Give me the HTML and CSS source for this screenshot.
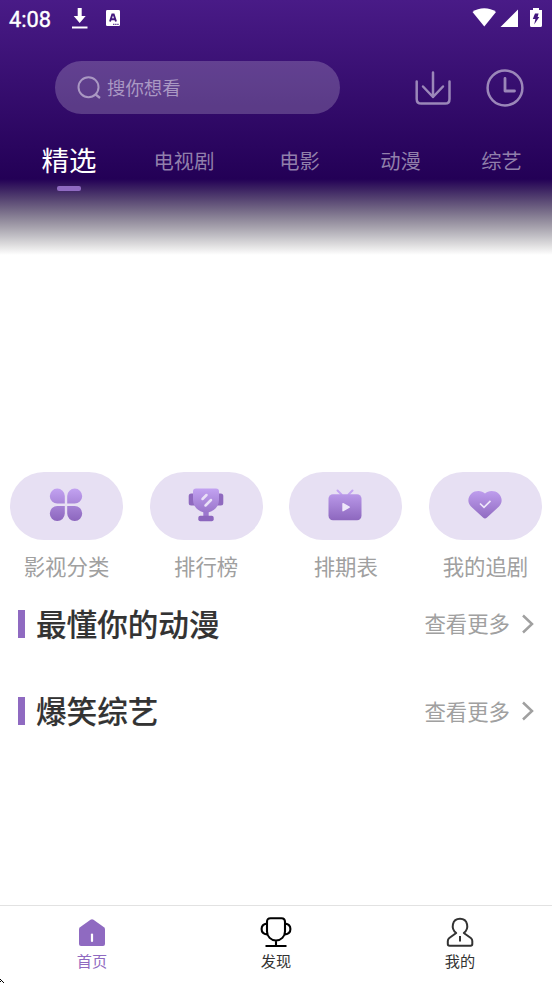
FILE: index.html
```html
<!DOCTYPE html>
<html lang="zh-CN">
<head>
<meta charset="utf-8">
<title>首页</title>
<link rel="stylesheet" href="styles.css">
</head>
<body>
<svg class="defs" width="0" height="0" aria-hidden="true">
  <defs>
    <linearGradient id="violet" gradientUnits="userSpaceOnUse" x1="0" y1="3" x2="0" y2="36"><stop offset="0" stop-color="#c3a3f2"/><stop offset="1" stop-color="#8c66bd"/></linearGradient>
  </defs>
</svg>
<div class="app">
  <header class="hero">
    <div class="status">
      <span class="time">4:08</span>
      <svg class="st-down" width="16" height="22" viewBox="0 0 16 22"><path d="M5.700 1h4v8h4l-6 7-6-7h4z" fill="#fff"/><path d="M0 20.500h15.500" stroke="#fff" stroke-width="2"/></svg>
      <svg class="st-app" width="14" height="16" viewBox="0 0 14 16"><rect width="14" height="16" rx="1.200" fill="#fff"/><path d="M4 11.500L6.300 4.500h1.400L10 11.500M5 9.200h4" fill="none" stroke="#42187e" stroke-width="1.900"/><path d="M7 14.300h6" stroke="#42187e" stroke-dasharray="1.500 .6"/></svg>
      <svg class="st-right" width="71" height="22" viewBox="0 0 71 22"><path d="M.5 5C7 0 17.500 0 24 5L12.300 19.500z" fill="#fff"/><path d="M46 2.500V20H28.500z" fill="#fff"/><path d="M58 3h3V1h6v2h3v15.500q0 1.500-1.500 1.500h-9Q58 20 58 18.500z" fill="#fff"/><path d="M63 6.500h3.600l-1 3.500h1.700l-5.100 7.500 1.200-5.500h-2.600z" fill="#42187e"/></svg>
    </div>
    <div class="topbar">
      <div class="search">
        <svg width="24" height="24" viewBox="0 0 24 24" fill="none" stroke="#aa98c3" stroke-width="2"><circle cx="11.500" cy="11.200" r="10"/><path d="M18 18l5 4" stroke-width="2.300"/></svg>
        <span>搜你想看</span>
      </div>
      <svg class="ic-down" width="38" height="36" viewBox="0 0 38 36" fill="none" stroke="#9b87b9" stroke-width="2.500" stroke-linecap="round" stroke-linejoin="round"><path d="M2.700 11.500V29q0 4.600 4.600 4.600h24Q35.500 33.600 35.500 29V11.500M19 2.500v24.500M9 16.500L19 27l10-10.500"/></svg>
      <svg class="ic-clock" width="38" height="38" viewBox="0 0 38 38" fill="none" stroke="#9b87b9" stroke-width="2.500"><circle cx="19" cy="19" r="17.400"/><path d="M19 9.500V22h9.500" stroke-width="2.800" stroke-linecap="round" stroke-linejoin="round"/></svg>
    </div>
    <nav class="tabs">
      <a class="tab active">精选</a><a class="tab wide">电视剧</a><a class="tab">电影</a><a class="tab">动漫</a><a class="tab">综艺</a>
    </nav>
  </header>

  <section class="shortcuts">
    <div class="shortcut"><div class="pill">
      <svg width="40" height="40" viewBox="0 0 40 40" fill="url(#violet)"><path d="M18.800 18.600H11.500A7.500 7.500 0 1 1 18.800 11zM21.200 18.600h7.300A7.500 7.500 0 1 0 21.200 11zM18.800 21H11.500A7.500 7.500 0 1 0 18.800 28.600zM21.200 21h7.300A7.500 7.500 0 1 1 21.200 28.600z"/></svg>
    </div><span>影视分类</span></div>
    <div class="shortcut"><div class="pill">
      <svg width="40" height="40" viewBox="0 0 40 40"><rect x="2.700" y="8.500" width="8" height="12" rx="2.500" fill="#8f69bf"/><rect x="29.300" y="8.500" width="8" height="12" rx="2.500" fill="#8f69bf"/><path d="M17.300 25h5.400v6h-5.400z" fill="#9c77ce"/><rect x="12.300" y="30.800" width="15.400" height="5.400" rx="2" fill="#8c66bd"/><path d="M10 3.500h20q3 0 3 3V15c0 7-6 12.500-13 12.500S7 22 7 15V6.500q0-3 3-3z" fill="url(#violet)"/><path d="M16.500 14l4-4M19.500 20.500l5.500-5.500" stroke="#e9e0f7" stroke-width="2.500" stroke-linecap="round"/></svg>
    </div><span>排行榜</span></div>
    <div class="shortcut"><div class="pill">
      <svg width="40" height="40" viewBox="0 0 40 40"><path d="M12.500 5.500l4 4M27.500 5.500l-4 4" stroke="#c3a3f2" stroke-width="2" stroke-linecap="round"/><rect x="3.500" y="9.300" width="33" height="26" rx="4.500" fill="url(#violet)"/><path d="M18 18.700v7l6.200-3.500z" fill="#eee6fa" stroke="#eee6fa" stroke-width="1.400" stroke-linejoin="round"/></svg>
    </div><span>排期表</span></div>
    <div class="shortcut"><div class="pill">
      <svg width="40" height="40" viewBox="0 0 40 40"><path d="M20 8.500C23 5.500 29.500 5 33.500 8.500C37.500 12 37.700 18 34 21.500L22 32.600Q20 34.500 18 32.600L6 21.500C2.300 18 2.500 12 6.500 8.500C10.500 5 17 5.500 20 8.500z" fill="url(#violet)"/><path d="M15 18.500l4 3.800 6.500-6.500" fill="none" stroke="#eee6fa" stroke-width="1.700"/></svg>
    </div><span>我的追剧</span></div>
  </section>

  <section class="row">
    <h2><span>最懂你的动漫</span></h2>
    <a class="more"><span>查看更多</span><svg width="12" height="20" viewBox="0 0 12 20" fill="none" stroke="#a0a0a0" stroke-width="2.500"><path d="M1 1.500l9 8.500-9 8.500"/></svg></a>
  </section>
  <section class="row">
    <h2><span>爆笑综艺</span></h2>
    <a class="more"><span>查看更多</span><svg width="12" height="20" viewBox="0 0 12 20" fill="none" stroke="#a0a0a0" stroke-width="2.500"><path d="M1 1.500l9 8.500-9 8.500"/></svg></a>
  </section>

  <nav class="bottom">
    <a class="item on"><svg width="32" height="32" viewBox="0 0 32 32"><path d="M14.500 3.700q1.500-1 3 0L28 11.200q1 .8 1 2v14.800q0 2-2 2H5q-2 0-2-2V13.200q0-1.200 1-2z" fill="#8f6ac1"/><path d="M16 18.500v6.500" stroke="#fff" stroke-width="2.200" stroke-linecap="round"/></svg><span>首页</span></a>
    <a class="item"><svg width="32" height="32" viewBox="0 0 32 32" fill="none" stroke="#000" stroke-width="2.100"><path d="M10.500 2.200h11Q25 2.200 25 6v9.500c0 5-4 9-9 9s-9-4-9-9V6q0-3.800 3.500-3.800zM7 7.500C-.2 8.500-.2 17.500 7 18.500M25 7.500c7.200 1 7.200 10 0 11M16 24.500V30M5.500 30h21"/></svg><span>发现</span></a>
    <a class="item"><svg width="32" height="32" viewBox="0 0 32 32" fill="none" stroke="#333" stroke-width="2" stroke-linejoin="round"><path d="M12.200 17C6.500 12.500 8 2.800 16 2.800S25.500 12.500 19.800 17l7 5q1.500 1.200 1.500 3v3q0 1.700-1.700 1.700h-21Q3.800 29.700 3.800 28v-3q0-1.800 1.500-3z"/><path d="M16 20v5.500"/></svg><span>我的</span></a>
  </nav>
  <svg class="mark" width="5" height="5" viewBox="0 0 5 5" shape-rendering="crispEdges"><path d="M0 1h1v1H0zM1 2h1v1H1zM2 3h1v1H2zM3 4h1v1H3zM0 3h1v1H0z"/></svg>
</div>
</body>
</html>
```
FILE: styles.css
```css
* { box-sizing: border-box; }
body { margin: 0; background: #fff; font-family: "Noto Sans CJK SC", sans-serif; }
svg { display: block; flex: none; }
.defs { position: absolute; }
.app { position: relative; width: 552px; height: 983px; display: flex; flex-direction: column; overflow: hidden; }

.hero {
  height: 472px;
  flex: none;
  background: linear-gradient(#491b87 0, #230056 179px, #3a2061 188.500px, #534070 198px, #6d6081 207.500px, #888095 217px, #a49fab 226.500px, #c1bfc5 236px, #e0dfe0 245.500px, #fff 255px);
}
.status { display: flex; height: 37px; align-items: center; padding-left: 9px; color: #fff; }
.time { width: 63px; font: 400 21.800px/37px Roboto, sans-serif; -webkit-text-stroke: .4px #fff; padding-top: 2px; }
.st-down { margin-top: -1px; }
.st-app { margin-left: 18px; margin-top: -1px; }
.st-right { margin-left: auto; margin-right: 9px; margin-top: -2px; }

.topbar { display: flex; align-items: center; height: 53px; margin-top: 24px; padding-left: 55px; }
.search { display: flex; align-items: center; width: 285px; height: 53px; border-radius: 27px; padding-left: 22px; gap: 6px; background: rgba(255, 255, 255, .2); color: #aa98c3; font-size: 18.400px; }
.search span { margin-top: -1px; }
.ic-down { margin-left: 74px; }
.ic-clock { margin-left: 33.500px; }

.tabs { display: flex; height: 77px; padding-left: 12px; }
.tab { width: 101px; height: 77px; line-height: 92px; text-align: center; font-size: 20.300px; color: #917fab; }
.tab.wide { width: 122px; margin-right: 4px; margin-left: 9px; }
.tab.active { width: 114px; margin-right: -12px; font-size: 27.500px; line-height: 90px; color: #fff; }
.tab.active::after { content: ""; display: block; width: 24px; height: 5px; margin: -18px auto 0; border-radius: 2px; background: #8f6ac1; }

.shortcuts { display: flex; justify-content: space-between; padding: 0 10px; height: 115px; flex: none; }
.shortcut { width: 113px; text-align: center; font-size: 21.400px; line-height: 52px; color: #a0a0a0; }
.pill { display: flex; align-items: center; justify-content: center; height: 67.500px; border-radius: 34px; background: #e7e0f3; }
.pill svg { margin-top: -1px; margin-left: -1px; }

.row { display: flex; flex: none; align-items: center; height: 87.500px; padding: 0 18px; }
.shortcuts + .row { margin-top: -7px; }
h2 { display: flex; align-items: center; gap: 11px; margin: 0; font-size: 30.600px; font-weight: 500; line-height: 38px; color: #333; -webkit-text-stroke: .15px #333; }
h2 span { margin-top: -2px; }
h2::before { content: ""; width: 7px; height: 28px; background: #8f6ac1; }
.more { display: flex; align-items: center; gap: 12px; margin-left: auto; font-size: 21.400px; color: #a0a0a0; }
.more span { margin-top: -2px; }

.bottom { display: flex; margin-top: auto; height: 78px; border-top: 1px solid #e2e2e2; }
.item { flex: 1; display: flex; flex-direction: column; align-items: center; padding-top: 10px; font-size: 15.200px; line-height: 24px; color: #333; }
.item.on { color: #8f6ac1; }
.mark { position: absolute; left: 0; bottom: 0; }
```
